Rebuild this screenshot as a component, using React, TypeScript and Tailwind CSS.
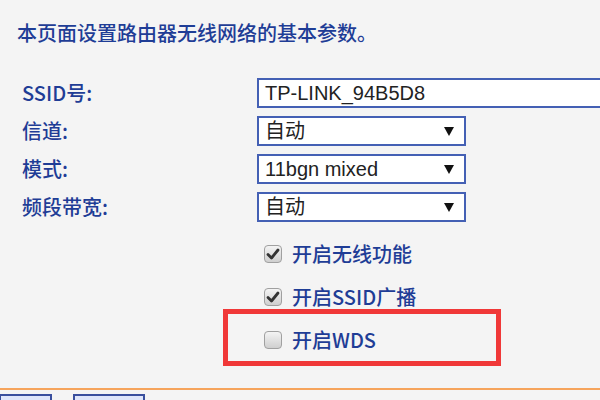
import React from 'react';

const CJK = '"Noto Sans CJK SC", "Noto Sans", sans-serif';
const LATIN = '"Liberation Sans", "Noto Sans CJK SC", sans-serif';

function Arrow() {
  return (
    <svg width="10" height="10" viewBox="0 0 10 10" className="shrink-0">
      <path d="M0 1 L10 1 L5 10 Z" fill="#111" />
    </svg>
  );
}

function Select({ value }: { value: string }) {
  return (
    <div className="w-[209px] h-[30px] shrink-0 border-2 border-[#4460b4] bg-white flex items-center justify-between pl-[6px] pr-[10px]">
      <span className="text-[20px] leading-none text-[#222]" style={{ fontFamily: LATIN }}>{value}</span>
      <Arrow />
    </div>
  );
}

function Checkbox({ checked }: { checked: boolean }) {
  return (
    <span className="w-[18px] h-[18px] rounded-[4px] border border-[#a0a0a0] bg-gradient-to-b from-[#f4f4f4] to-[#cfcfcf] flex items-center justify-center shrink-0">
      {checked && (
        <svg width="14" height="14" viewBox="0 0 14 14">
          <path d="M2 7.5 L5.5 11 L12 3" fill="none" stroke="#333" strokeWidth="2.8" strokeLinecap="round" strokeLinejoin="round" />
        </svg>
      )}
    </span>
  );
}

export default function App() {
  const rows: { label: string; control: React.ReactNode }[] = [
    {
      label: 'SSID号:',
      control: (
        <div className="w-[360px] h-[30px] shrink-0 border-2 border-[#4460b4] bg-white flex items-center pl-[6px]">
          <span className="text-[20px] leading-none text-[#222]" style={{ fontFamily: LATIN }}>TP-LINK_94B5D8</span>
        </div>
      ),
    },
    { label: '信道:', control: <Select value="自动" /> },
    { label: '模式:', control: <Select value="11bgn mixed" /> },
    { label: '频段带宽:', control: <Select value="自动" /> },
  ];

  const checks = [
    { label: '开启无线功能', checked: true },
    { label: '开启SSID广播', checked: true },
    { label: '开启WDS', checked: false },
  ];

  return (
    <div className="relative w-[600px] h-[400px] overflow-hidden bg-[#f4f4f4] text-[#1f3d96]" style={{ fontFamily: CJK }}>
      <p className="pt-[19px] pl-[17px] text-[20px] leading-[28px] font-medium">本页面设置路由器无线网络的基本参数。</p>

      <div className="mt-[31px] flex flex-col gap-[8px]">
        {rows.map(r => (
          <div key={r.label} className="flex items-center h-[30px]">
            <span className="w-[257px] shrink-0 pl-[22px] text-[20px] leading-none font-medium">{r.label}</span>
            {r.control}
          </div>
        ))}
      </div>

      <div className="mt-[10px] pl-[264px] flex flex-col">
        {checks.map(c => (
          <div key={c.label} className="h-[43px] flex items-center gap-[10px]">
            <Checkbox checked={c.checked} />
            <span className="text-[20px] leading-none font-medium">{c.label}</span>
          </div>
        ))}
      </div>

      <div className="mt-[27px] h-[2px] bg-[#f6a45c]" />
      <div className="mt-[4px] flex gap-[21px]">
        <div className="w-[53px] h-[20px] -ml-[1px] border-2 border-[#3a4f9e] bg-[#dfe6fb]" />
        <div className="w-[72px] h-[20px] border-2 border-[#3a4f9e] bg-[#dfe6fb]" />
      </div>

      {/* red annotation box */}
      <div className="absolute left-[223px] top-[309px] w-[278px] h-[57px] border-[5px] border-[#f03838]" />
    </div>
  );
}
